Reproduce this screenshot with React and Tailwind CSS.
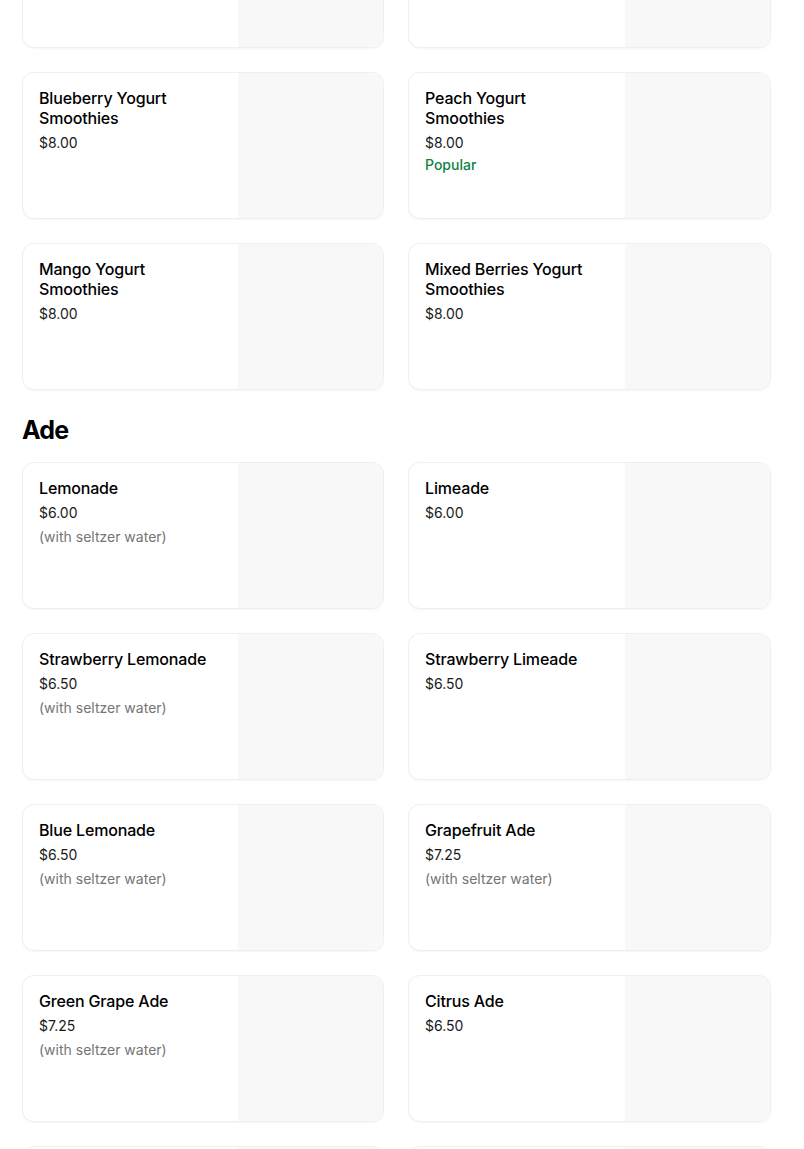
const SMOOTHIES = [
  { name: 'Mango Smoothies', price: '$8.00' },
  { name: 'Strawberry Smoothies', price: '$8.00' },
  { name: 'Blueberry Yogurt Smoothies', price: '$8.00' },
  { name: 'Peach Yogurt Smoothies', price: '$8.00', popular: true },
  { name: 'Mango Yogurt Smoothies', price: '$8.00' },
  { name: 'Mixed Berries Yogurt Smoothies', price: '$8.00' },
]

const ADE = [
  { name: 'Lemonade', price: '$6.00', note: '(with seltzer water)' },
  { name: 'Limeade', price: '$6.00' },
  { name: 'Strawberry Lemonade', price: '$6.50', note: '(with seltzer water)' },
  { name: 'Strawberry Limeade', price: '$6.50' },
  { name: 'Blue Lemonade', price: '$6.50', note: '(with seltzer water)' },
  { name: 'Grapefruit Ade', price: '$7.25', note: '(with seltzer water)' },
  { name: 'Green Grape Ade', price: '$7.25', note: '(with seltzer water)' },
  { name: 'Citrus Ade', price: '$6.50' },
  { name: 'Honey Citron Ade', price: '$7.25' },
  { name: 'Passion Fruit Ade', price: '$7.25' },
]

function ItemCard({ item }) {
  return (
    <div className="h-[147px] flex rounded-xl border border-[#efefef] bg-white overflow-hidden shadow-[0_1px_2px_rgba(0,0,0,0.04)]">
      <div className="flex-1 min-w-0 px-4 pt-[15px]">
        <p className="text-[16px] leading-5 font-medium tracking-[-0.01em] text-black">{item.name}</p>
        <p className="mt-[5px] text-[14px] leading-5 text-[#1a1a1a]">{item.price}</p>
        {item.note && (
          <p className="mt-1 text-[14px] leading-5 text-[#757575]">{item.note}</p>
        )}
        {item.popular && (
          <p className="mt-[2px] text-[14px] leading-5 font-medium text-[#0e8345]">Popular</p>
        )}
      </div>
      <div className="w-[145px] shrink-0 bg-[#f8f8f8]" />
    </div>
  )
}

export default function App() {
  return (
    <div className="h-[1149px] overflow-hidden bg-white" style={{ fontFamily: 'Inter, "Noto Sans", sans-serif' }}>
      <div className="-mt-[99px] pl-[22px] pr-[33px]">
        <div className="grid grid-cols-[362px_363px] gap-6">
          {SMOOTHIES.map(item => <ItemCard key={item.name} item={item} />)}
        </div>

        <h2 className="mt-[28px] mb-[20px] text-[25px] leading-6 font-bold tracking-[-0.03em] text-black">Ade</h2>

        <div className="grid grid-cols-[362px_363px] gap-6">
          {ADE.map(item => <ItemCard key={item.name} item={item} />)}
        </div>
      </div>
    </div>
  )
}
